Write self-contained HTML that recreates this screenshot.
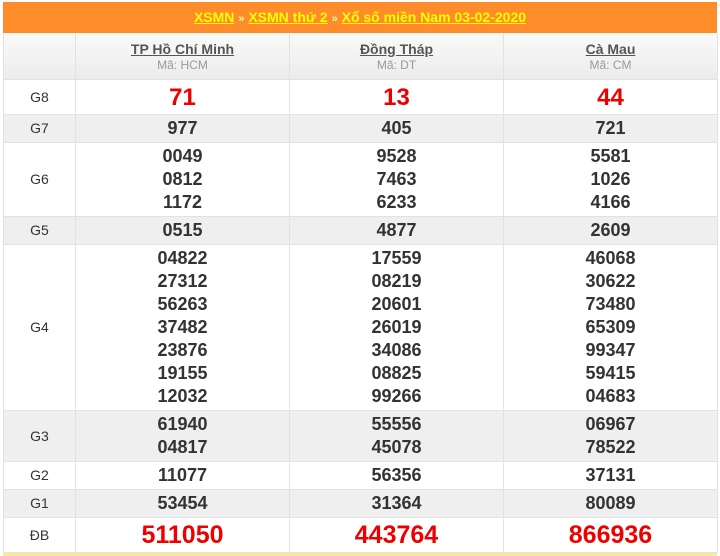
<!DOCTYPE html>
<html><head><meta charset="utf-8"><style>
body{margin:0;width:720px;height:556px;background:#fff;font-family:"Liberation Sans",Arial,sans-serif;overflow:hidden;position:relative}
.bar{position:absolute;left:3px;top:2px;width:714px;height:31px;background:#ff8c2b;text-align:center;line-height:31px;font-size:14px;font-weight:bold;color:#fff}
.bar a{color:#ffff00;text-decoration:underline}
.bar span{color:#ffffa0;font-size:11px}
table{position:absolute;left:3px;top:33px;width:714px;border-collapse:collapse;table-layout:fixed}
td{border:1px solid #e2e2e2;text-align:center;padding:0;color:#333;font-weight:bold;font-size:18px;line-height:23px}
td.l{font-weight:normal;font-size:14px;color:#333}
tr.h td{background:linear-gradient(#fafafa,#ececec);height:46px;border-top:none;line-height:16px;vertical-align:middle}
.h a{color:#555;text-decoration:underline;font-size:14px;font-weight:bold}
.h small{display:block;color:#999;font-weight:normal;font-size:12px}
tr.g td{background:#efefef}
.r{color:#e00;font-size:24px}
.db{color:#e00;font-size:25px}
.y{position:absolute;left:3px;top:553px;width:714px;height:3px;background:#fde99c}
</style></head><body>
<div class="bar"><a>XSMN</a> <span>»</span> <a>XSMN thứ 2</a> <span>»</span> <a>Xổ số miền Nam 03-02-2020</a></div>
<table>
<col style="width:72px"><col style="width:214px"><col style="width:214px"><col style="width:214px">
<tr class="h"><td></td><td><a>TP Hồ Chí Minh</a><small>Mã: HCM</small></td><td><a>Đồng Tháp</a><small>Mã: DT</small></td><td><a>Cà Mau</a><small>Mã: CM</small></td></tr>
<tr style="height:35px"><td class="l">G8</td><td class="r">71</td><td class="r">13</td><td class="r">44</td></tr>
<tr class="g" style="height:28px"><td class="l">G7</td><td>977</td><td>405</td><td>721</td></tr>
<tr style="height:74px"><td class="l">G6</td><td>0049<br>0812<br>1172</td><td>9528<br>7463<br>6233</td><td>5581<br>1026<br>4166</td></tr>
<tr class="g" style="height:28px"><td class="l">G5</td><td>0515</td><td>4877</td><td>2609</td></tr>
<tr style="height:166px"><td class="l">G4</td><td>04822<br>27312<br>56263<br>37482<br>23876<br>19155<br>12032</td><td>17559<br>08219<br>20601<br>26019<br>34086<br>08825<br>99266</td><td>46068<br>30622<br>73480<br>65309<br>99347<br>59415<br>04683</td></tr>
<tr class="g" style="height:51px"><td class="l">G3</td><td>61940<br>04817</td><td>55556<br>45078</td><td>06967<br>78522</td></tr>
<tr style="height:28px"><td class="l">G2</td><td>11077</td><td>56356</td><td>37131</td></tr>
<tr class="g" style="height:28px"><td class="l">G1</td><td>53454</td><td>31364</td><td>80089</td></tr>
<tr style="height:35px"><td class="l">ĐB</td><td class="db">511050</td><td class="db">443764</td><td class="db">866936</td></tr>
</table>
<div class="y"></div>
</body></html>
